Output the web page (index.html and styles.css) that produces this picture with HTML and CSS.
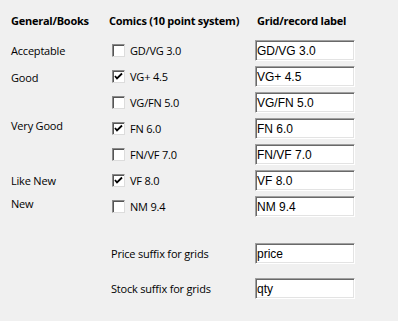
FILE: index.html
```html
<!DOCTYPE html>
<html lang="en">
<head>
    <meta charset="UTF-8">
    <meta name="viewport" content="width=device-width, initial-scale=1.0">
    <title>Grade labels</title>
    <link rel="stylesheet" href="styles.css">
</head>
<body>
    <div class="grades">
        <div class="head">General/Books</div>
        <div class="head">Comics (10 point system)</div>
        <div class="head head-grid">Grid/record label</div>

        <div class="general">Acceptable</div>
        <label class="check"><span class="box"></span>GD/VG 3.0</label>
        <input type="text" value="GD/VG 3.0">

        <div class="general low">Good</div>
        <label class="check"><span class="box"><svg viewBox="0 0 11 11"><polyline points="2,5 4,7.5 9,2.5"/></svg></span>VG+ 4.5</label>
        <input type="text" value="VG+ 4.5">

        <div class="general"></div>
        <label class="check"><span class="box"></span>VG/FN 5.0</label>
        <input type="text" value="VG/FN 5.0">

        <div class="general up">Very Good</div>
        <label class="check"><span class="box"><svg viewBox="0 0 11 11"><polyline points="2,5 4,7.5 9,2.5"/></svg></span>FN 6.0</label>
        <input type="text" value="FN 6.0">

        <div class="general"></div>
        <label class="check"><span class="box"></span>FN/VF 7.0</label>
        <input type="text" value="FN/VF 7.0">

        <div class="general">Like New</div>
        <label class="check"><span class="box"><svg viewBox="0 0 11 11"><polyline points="2,5 4,7.5 9,2.5"/></svg></span>VF 8.0</label>
        <input type="text" value="VF 8.0">

        <div class="general up">New</div>
        <label class="check"><span class="box"></span>NM 9.4</label>
        <input type="text" value="NM 9.4">
    </div>

    <div class="suffixes">
        <label>Price suffix for grids</label>
        <input type="text" value="price">
        <label>Stock suffix for grids</label>
        <input type="text" value="qty">
    </div>
</body>
</html>
```

FILE: styles.css
```css
body {
    margin: 0;
    padding: 10px 0 0 11px;
    background-color: #f0f0f0;
    font-family: "Open Sans", "Noto Sans", sans-serif;
    font-size: 11px;
    letter-spacing: -0.2px;
    color: #000;
}
.grades {
    display: grid;
    grid-template-columns: 98px 146px 100px;
    grid-template-rows: 25px repeat(7, 21px);
    row-gap: 5px;
}
.head {
    font-weight: bold;
    line-height: 21px;
    align-self: start;
    letter-spacing: -0.25px;
}
.head-grid {
    padding-left: 2px;
}
.general {
    align-self: center;
}
.general.up {
    margin-bottom: 6px;
}
.general.low {
    margin-top: 2px;
}
.check {
    display: flex;
    align-items: center;
    gap: 5px;
    padding-left: 3px;
}
.box {
    width: 13px;
    height: 13px;
    box-sizing: border-box;
    background-color: #fff;
    border: 1px solid;
    border-color: #8a8a8a #dcdcdc #dcdcdc #8a8a8a;
    box-shadow: inset 1px 1px 0 #555;
    display: flex;
    align-items: center;
    justify-content: center;
}
.box svg {
    width: 11px;
    height: 11px;
}
.box polyline {
    fill: none;
    stroke: #000;
    stroke-width: 1.8;
}
input {
    width: 100px;
    height: 21px;
    box-sizing: border-box;
    margin: 0;
    padding: 0 2px 0 1px;
    background-color: #fff;
    border: 1px solid;
    border-color: #a0a0a0 #fff #fff #a0a0a0;
    box-shadow: inset 1px 1px 0 #696969, inset -1px -1px 0 #e3e3e3;
    font-family: "Liberation Sans", Arial, sans-serif;
    font-size: 12px;
    letter-spacing: 0;
    color: #000;
    outline: none;
}
.suffixes {
    display: grid;
    grid-template-columns: 144px 100px;
    grid-auto-rows: 21px;
    row-gap: 14px;
    margin: 26px 0 0 100px;
    align-items: center;
}
```
